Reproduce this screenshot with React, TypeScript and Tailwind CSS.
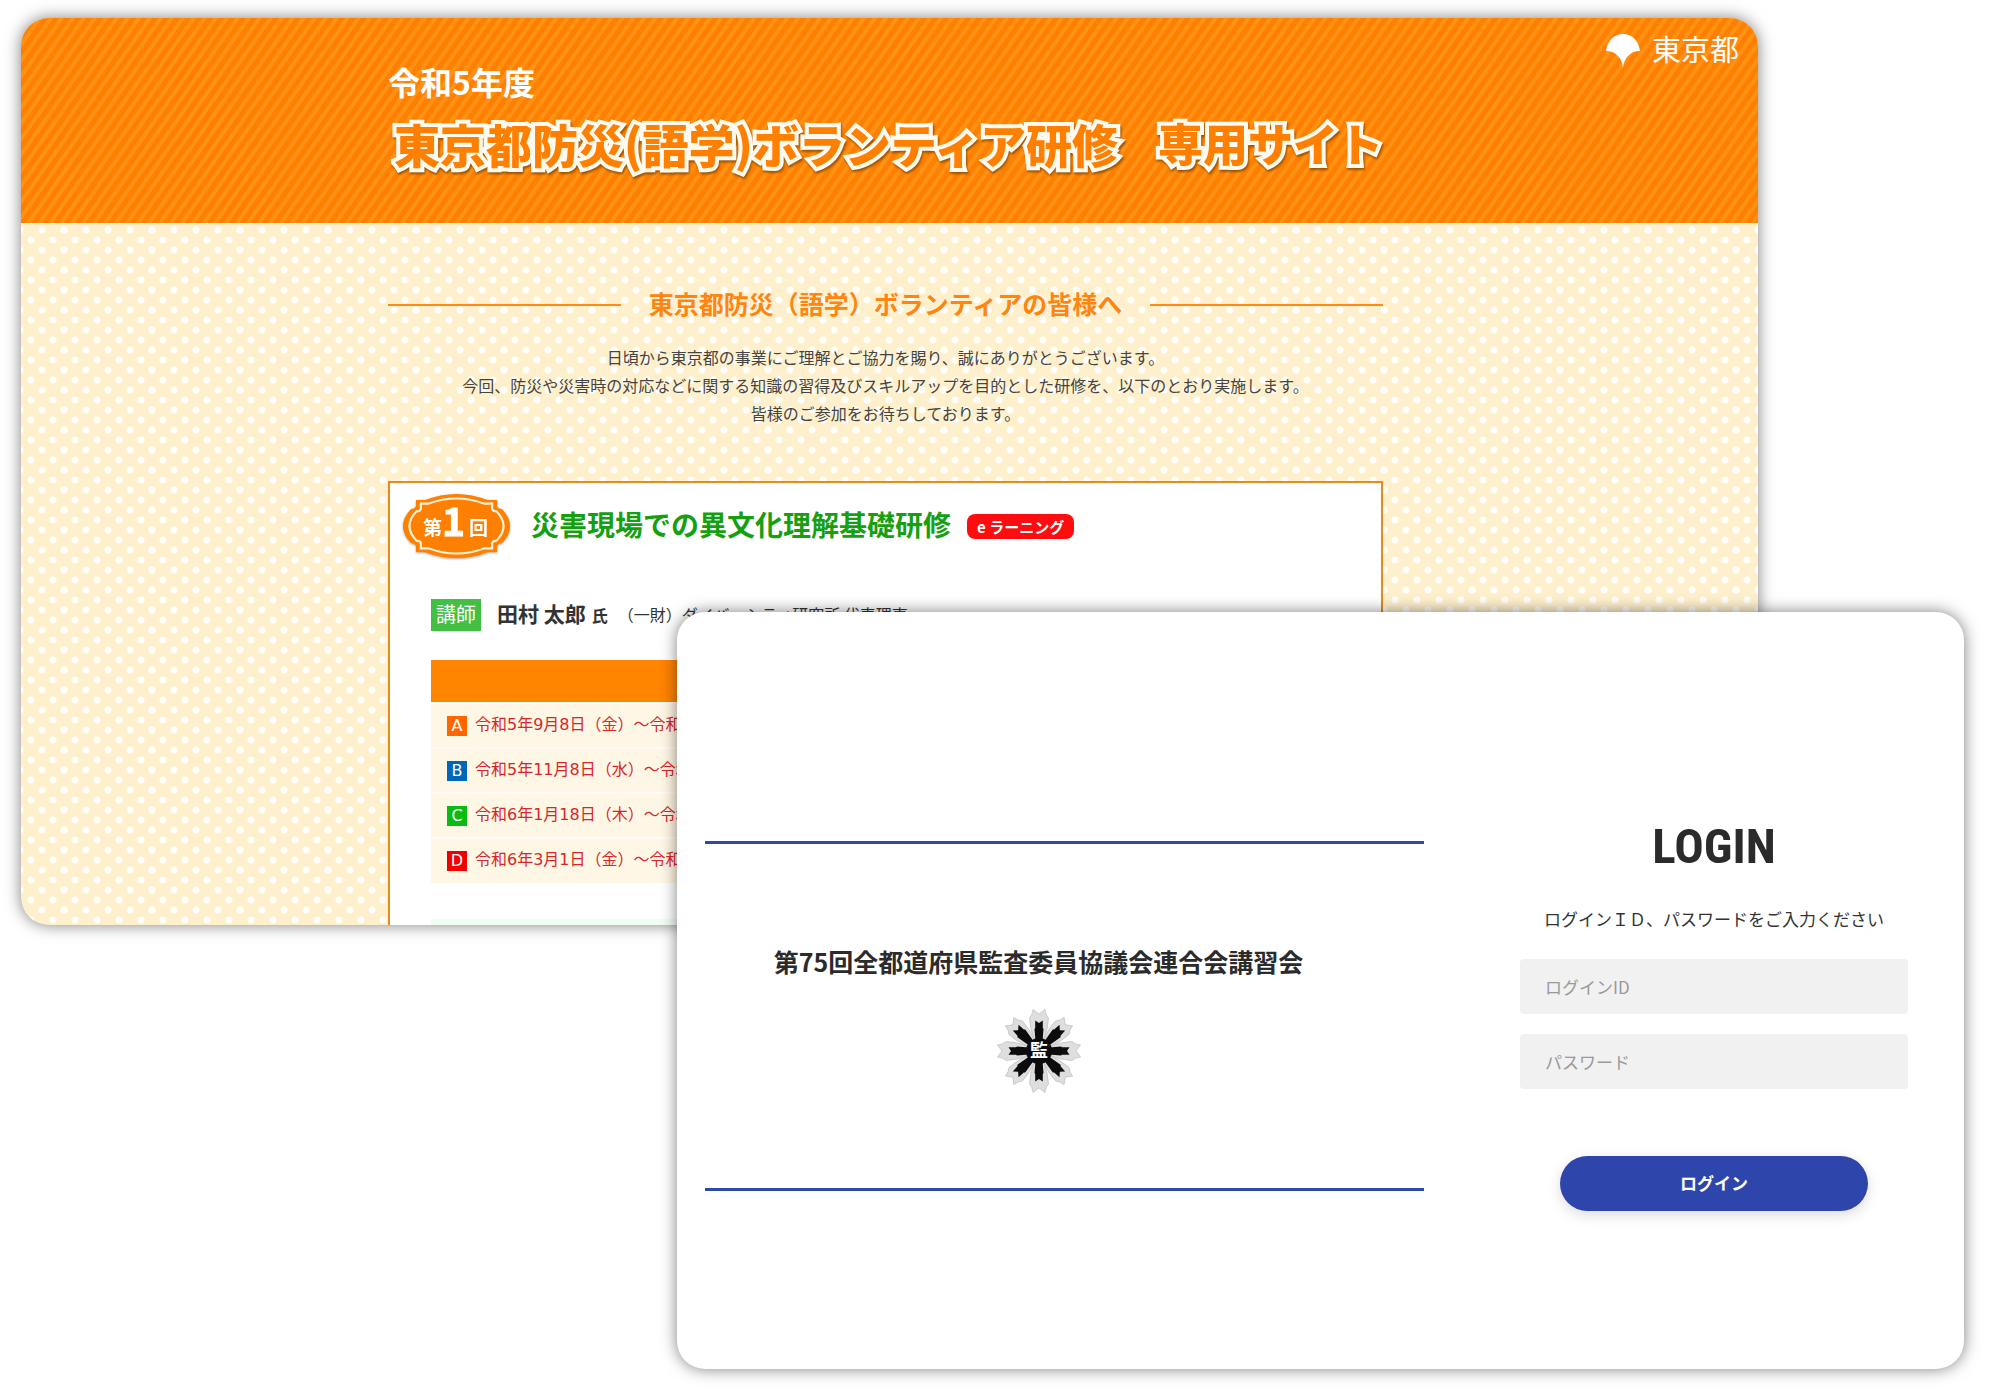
import { useId } from "react"

type Period = {
  mark: string
  date: string
  color: string
}

const periods: Period[] = [
  { mark: "A", date: "令和5年9月8日（金）〜令和", color: "bg-[#ff6600]" },
  { mark: "B", date: "令和5年11月8日（水）〜令和", color: "bg-[#0066b9]" },
  { mark: "C", date: "令和6年1月18日（木）〜令和", color: "bg-[#0abb12]" },
  { mark: "D", date: "令和6年3月1日（金）〜令和", color: "bg-[#f20000]" },
]

const angles = [0, 45, 90, 135, 180, 225, 270, 315]

const badgePath =
  "M13 6 L22 6 Q53 -6 85 6 L94 6 L94 12 Q95 15 99 15 Q115 32 99 49 Q95 49 94 52 L94 58 L85 58 Q53 70 22 58 L13 58 L13 52 Q12 49 8 49 Q-8 32 8 15 Q12 15 13 12Z"

const TokyoLogo = () => {
  return (
    <a href="#" className="absolute top-4 right-[19px] flex items-center gap-3 text-white">
      <svg width="34" height="34" viewBox="0 0 34 34" fill="currentColor" aria-hidden="true">
        <path d="M0 17 C1 7 8 0 17 0 C26 0 33 7 34 17 C25 17 18 23 17 34 C16 23 9 17 0 17Z" />
      </svg>
      <span className="pb-1.5 text-[29px] leading-7">東京都</span>
    </a>
  )
}

const RoundBadge = () => {
  return (
    <svg
      width="107"
      height="64"
      viewBox="0 0 107 64"
      className="shrink-0 overflow-visible drop-shadow-[0_1px_1px_rgba(120,60,0,0.5)]"
    >
      <path d={badgePath} fill="#ff7f00" />
      <path
        d={badgePath}
        fill="none"
        stroke="#fff3dc"
        strokeWidth="2.4"
        transform="translate(53.5 32) scale(.88 .86) translate(-53.5 -32)"
      />
      <g fill="#fff" fontWeight="700">
        <text x="20" y="41" fontSize="19">
          第
        </text>
        <text x="39" y="42" fontSize="39" stroke="#fff" strokeWidth="1">
          1
        </text>
        <text x="66" y="41" fontSize="19">
          回
        </text>
      </g>
    </svg>
  )
}

const Emblem = () => {
  return (
    <svg width="84" height="84" viewBox="-42 -42 84 84" aria-hidden="true">
      <g fill="#dedede" stroke="#bdbdbd" strokeWidth="0.7">
        {angles.map((a) => (
          <path
            key={a}
            transform={`rotate(${a})`}
            d="M-6 -41.5 L0 -37 L6 -41.5 Q6.5 -36 9.5 -33 Q9 -22 5 -12 L-5 -12 Q-9 -22 -9.5 -33 Q-6.5 -36 -6 -41.5Z"
          />
        ))}
      </g>
      <g fill="#0c0c0e">
        {angles.map((a) => (
          <path
            key={a}
            transform={`rotate(${a})`}
            d={
              a % 90 === 0
                ? "M-3.8 -30.5 L0 -28 L3.8 -30.5 L3.8 -23 L4.5 -22 L3.5 -10 L-3.5 -10 L-4.5 -22 L-3.8 -23Z"
                : "M-4 -33 L0 -29.5 L4 -33 L4.5 -26 L5.5 -25 L3 -10 L-3 -10 L-5.5 -25 L-4.5 -26Z"
            }
          />
        ))}
        <circle r="13" />
      </g>
      <text y="6" fontSize="18" fontWeight="700" fill="#fff" textAnchor="middle">
        監
      </text>
    </svg>
  )
}

const SiteHeader = () => {
  return (
    <header className="relative bg-[repeating-linear-gradient(125deg,#ff7f00_0,#ff7f00_4px,#ff9214_5px,#ff9214_8px,#ff7f00_9px)] pt-[47px] pr-2 pb-13">
      <TokyoLogo />
      <div className="mx-auto max-w-[995px]">
        <p className="text-[32px] leading-8 font-bold text-white">令和5年度</p>
        <h1 className="mt-[18px] flex items-center gap-10 pl-1.5 text-[46px] leading-14 font-black whitespace-nowrap text-[#ff7f00] drop-shadow-[1px_2px_1px_rgba(110,60,0,0.7)] [paint-order:stroke_fill] [-webkit-text-stroke:8px_#fffaf0]">
          <span>東京都防災(語学)ボランティア研修</span>
          <span className="text-[45px]">専用サイト</span>
        </h1>
      </div>
    </header>
  )
}

const CourseBox = () => {
  return (
    <section className="mt-[54px] border-2 border-b-0 border-[#ea8a1c] bg-white pt-[11px]">
      <div className="flex items-center pl-[13px]">
        <RoundBadge />
        <h3 className="ml-[21px] pb-1 text-[28px] leading-10 font-bold whitespace-nowrap text-[#179f12]">
          災害現場での異文化理解基礎研修
        </h3>
        <span className="ml-4 rounded-lg bg-[#ff0c10] px-2.5 text-[15px] leading-[25px] font-bold whitespace-nowrap text-white">
          e ラーニング
        </span>
      </div>
      <div className="px-[41px]">
        <p className="mt-[39px] flex items-center whitespace-nowrap text-[#333]">
          <span className="bg-[#43bf44] px-[5px] pb-0.5 text-xl leading-[30px] text-white">講師</span>
          <strong className="ml-4 pb-1 text-[21px] leading-8">田村 太郎</strong>
          <b className="ml-1.5 text-base">氏</b>
          <span className="ml-2.5 pb-0.5 text-base">（一財）ダイバーシティ研究所 代表理事</span>
        </p>
        <table className="mt-[27px] w-full border-collapse">
          <thead>
            <tr>
              <th className="h-[43px] bg-[#ff8400]" />
            </tr>
          </thead>
          <tbody>
            {periods.map((period) => (
              <tr key={period.mark} className="border-t-2 border-[#fffcf5] bg-[#fff7e5]">
                <td className="h-[45px] pl-4">
                  <div className="flex items-center gap-2 font-['DejaVu_Sans','Noto_Sans_CJK_JP',sans-serif] text-base whitespace-nowrap text-[#d7262b]">
                    <span className={`size-5 text-center leading-5 text-white ${period.color}`}>
                      {period.mark}
                    </span>
                    <span className="pb-0.5">{period.date}</span>
                  </div>
                </td>
              </tr>
            ))}
          </tbody>
        </table>
        <div className="mt-9 h-1.5 bg-[#f2fdf2]" />
      </div>
    </section>
  )
}

const TrainingSite = () => {
  return (
    <article className="ml-[21px] w-[86.85%] overflow-hidden rounded-[28px] bg-[#fff0cd] shadow-[0_0_16px_rgba(0,0,0,0.5)]">
      <SiteHeader />
      <div className="bg-[radial-gradient(circle_at_11px_10px,#fffefb_3px,transparent_4px),radial-gradient(circle_at_11px_10px,#fffefb_3px,transparent_4px)] bg-size-[22px_20px] bg-position-[10px_-3px,-1px_7px] pt-[62px] pr-2">
        <div className="mx-auto max-w-[995px]">
          <h2 className="flex items-center gap-7 text-[25px] leading-9 font-bold whitespace-nowrap text-[#ff8410] before:mt-1 before:h-0.5 before:flex-1 before:bg-[#ff8a14] after:mt-1 after:h-0.5 after:flex-1 after:bg-[#ff8a14]">
            東京都防災（語学）ボランティアの皆様へ
          </h2>
          <p className="mt-[22px] text-center text-base leading-7 text-[#444]">
            日頃から東京都の事業にご理解とご協力を賜り、誠にありがとうございます。
            <br />
            今回、防災や災害時の対応などに関する知識の習得及びスキルアップを目的とした研修を、以下のとおり実施します。
            <br />
            皆様のご参加をお待ちしております。
          </p>
          <CourseBox />
        </div>
      </div>
    </article>
  )
}

const LoginForm = () => {
  const id = useId()

  return (
    <form className="flex w-[388px] shrink-0 flex-col items-center" onSubmit={(e) => e.preventDefault()}>
      <h2 className="font-['Roboto_Condensed','Roboto',sans-serif] text-[49px] leading-14 font-bold text-[#2b2b2b]">
        LOGIN
      </h2>
      <p className="mt-8 text-[17px] leading-6 text-[#333]">
        ログインＩＤ、パスワードをご入力ください
      </p>
      <input
        id={`${id}-login`}
        type="text"
        aria-label="ログインID"
        placeholder="ログインID"
        className="mt-7 h-[55px] w-full rounded-sm bg-[#f1f1f1] px-[25px] text-[17px] placeholder:text-[#999]"
      />
      <input
        id={`${id}-password`}
        type="password"
        aria-label="パスワード"
        placeholder="パスワード"
        className="mt-5 h-[55px] w-full rounded-sm bg-[#f1f1f1] px-[25px] text-[17px] placeholder:text-[#999]"
      />
      <button
        type="submit"
        className="mt-[67px] h-[55px] w-[308px] rounded-full bg-[#2e46ab] pb-0.5 text-[17px] font-bold text-white shadow-[0_4px_14px_rgba(0,0,0,0.14)]"
      >
        ログイン
      </button>
    </form>
  )
}

const LoginCard = () => {
  return (
    <article className="relative -mt-[313px] mr-9 ml-auto flex w-[64.35%] items-start gap-24 rounded-[28px] bg-white pt-[207px] pr-14 pb-[158px] pl-7 shadow-[0_0_16px_rgba(0,0,0,0.5)]">
      <div className="mt-[22px] flex flex-1 flex-col items-center border-y-3 border-[#2f49ab] pt-[99px] pr-[52px] pb-[95px]">
        <h2 className="text-[25px] leading-9 font-bold whitespace-nowrap text-[#2b2b2b]">
          第75回全都道府県監査委員協議会連合会講習会
        </h2>
        <div className="mt-[30px]">
          <Emblem />
        </div>
      </div>
      <LoginForm />
    </article>
  )
}

const App = () => {
  return (
    <main className="min-h-screen overflow-hidden bg-white pt-[18px] pb-[30px] font-['Noto_Sans_CJK_JP',sans-serif]">
      <TrainingSite />
      <LoginCard />
    </main>
  )
}

export default App
